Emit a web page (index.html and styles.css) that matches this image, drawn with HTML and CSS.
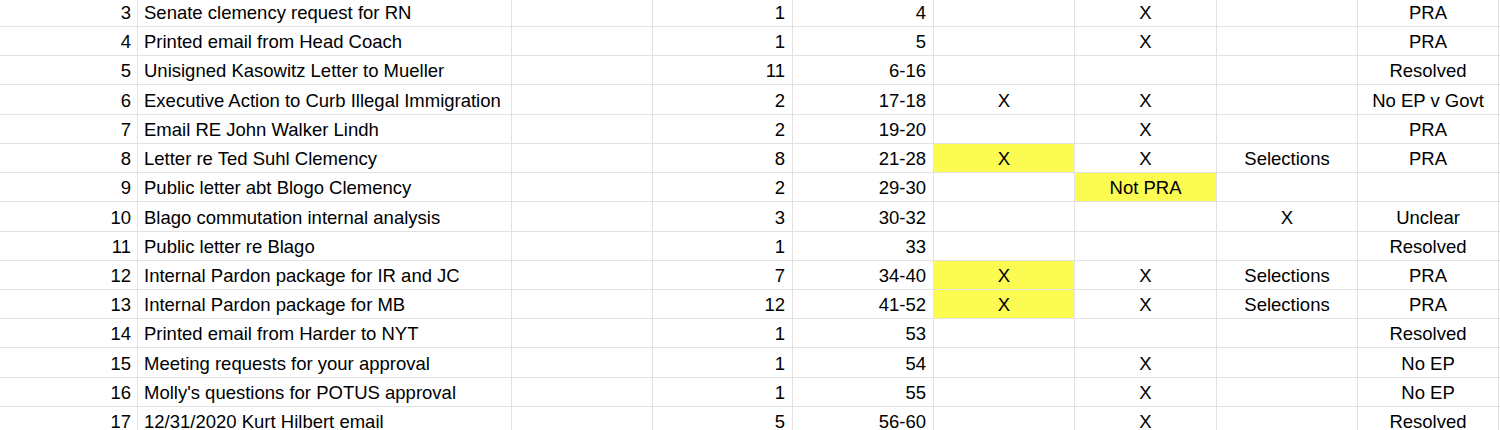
FILE: index.html
```html
<!DOCTYPE html>
<html lang="en">
<head>
<meta charset="utf-8">
<title>Sheet</title>
<link rel="stylesheet" href="styles.css">
</head>
<body>
<div class="sheet">
  <div class="c rn">3</div><div class="c tl">Senate clemency request for RN</div><div class="c"></div><div class="c num">1</div><div class="c num">4</div><div class="c ctr"></div><div class="c ctr">X</div><div class="c ctr"></div><div class="c ctr">PRA</div><div class="c"></div>
  <div class="c rn">4</div><div class="c tl">Printed email from Head Coach</div><div class="c"></div><div class="c num">1</div><div class="c num">5</div><div class="c ctr"></div><div class="c ctr">X</div><div class="c ctr"></div><div class="c ctr">PRA</div><div class="c"></div>
  <div class="c rn">5</div><div class="c tl">Unisigned Kasowitz Letter to Mueller</div><div class="c"></div><div class="c num">11</div><div class="c num">6-16</div><div class="c ctr"></div><div class="c ctr"></div><div class="c ctr"></div><div class="c ctr">Resolved</div><div class="c"></div>
  <div class="c rn">6</div><div class="c tl">Executive Action to Curb Illegal Immigration</div><div class="c"></div><div class="c num">2</div><div class="c num">17-18</div><div class="c ctr">X</div><div class="c ctr">X</div><div class="c ctr"></div><div class="c ctr">No EP v Govt</div><div class="c"></div>
  <div class="c rn">7</div><div class="c tl">Email RE John Walker Lindh</div><div class="c"></div><div class="c num">2</div><div class="c num">19-20</div><div class="c ctr"></div><div class="c ctr">X</div><div class="c ctr"></div><div class="c ctr">PRA</div><div class="c"></div>
  <div class="c rn">8</div><div class="c tl">Letter re Ted Suhl Clemency</div><div class="c"></div><div class="c num">8</div><div class="c num">21-28</div><div class="c ctr hl">X</div><div class="c ctr">X</div><div class="c ctr">Selections</div><div class="c ctr">PRA</div><div class="c"></div>
  <div class="c rn">9</div><div class="c tl">Public letter abt Blogo Clemency</div><div class="c"></div><div class="c num">2</div><div class="c num">29-30</div><div class="c ctr"></div><div class="c ctr hl">Not PRA</div><div class="c ctr"></div><div class="c ctr"></div><div class="c"></div>
  <div class="c rn">10</div><div class="c tl">Blago commutation internal analysis</div><div class="c"></div><div class="c num">3</div><div class="c num">30-32</div><div class="c ctr"></div><div class="c ctr"></div><div class="c ctr">X</div><div class="c ctr">Unclear</div><div class="c"></div>
  <div class="c rn">11</div><div class="c tl">Public letter re Blago</div><div class="c"></div><div class="c num">1</div><div class="c num">33</div><div class="c ctr"></div><div class="c ctr"></div><div class="c ctr"></div><div class="c ctr">Resolved</div><div class="c"></div>
  <div class="c rn">12</div><div class="c tl">Internal Pardon package for IR and JC</div><div class="c"></div><div class="c num">7</div><div class="c num">34-40</div><div class="c ctr hl">X</div><div class="c ctr">X</div><div class="c ctr">Selections</div><div class="c ctr">PRA</div><div class="c"></div>
  <div class="c rn">13</div><div class="c tl">Internal Pardon package for MB</div><div class="c"></div><div class="c num">12</div><div class="c num">41-52</div><div class="c ctr hl">X</div><div class="c ctr">X</div><div class="c ctr">Selections</div><div class="c ctr">PRA</div><div class="c"></div>
  <div class="c rn">14</div><div class="c tl">Printed email from Harder to NYT</div><div class="c"></div><div class="c num">1</div><div class="c num">53</div><div class="c ctr"></div><div class="c ctr"></div><div class="c ctr"></div><div class="c ctr">Resolved</div><div class="c"></div>
  <div class="c rn">15</div><div class="c tl">Meeting requests for your approval</div><div class="c"></div><div class="c num">1</div><div class="c num">54</div><div class="c ctr"></div><div class="c ctr">X</div><div class="c ctr"></div><div class="c ctr">No EP</div><div class="c"></div>
  <div class="c rn">16</div><div class="c tl">Molly's questions for POTUS approval</div><div class="c"></div><div class="c num">1</div><div class="c num">55</div><div class="c ctr"></div><div class="c ctr">X</div><div class="c ctr"></div><div class="c ctr">No EP</div><div class="c"></div>
  <div class="c rn">17</div><div class="c tl">12/31/2020 Kurt Hilbert email</div><div class="c"></div><div class="c num">5</div><div class="c num">56-60</div><div class="c ctr"></div><div class="c ctr">X</div><div class="c ctr"></div><div class="c ctr">Resolved</div><div class="c"></div>
</div>
</body>
</html>
```

FILE: styles.css
```css
html, body {
  margin: 0;
  padding: 0;
  background: #ffffff;
  overflow: hidden;
}

.sheet {
  display: grid;
  grid-template-columns: 137px 373px 140px 139px 140px 140px 141px 140px 140px 1fr;
  grid-auto-rows: 28.23px;
  gap: 1px;
  width: 1500px;
  margin-top: -2.2px;
  background: #e2e2e2;
  font-family: "Liberation Sans", Arial, sans-serif;
  font-size: 18.5px;
  color: #000000;
}

.c {
  background: #ffffff;
  display: flex;
  align-items: flex-end;
  padding: 0 6px 4px;
  line-height: 18px;
  white-space: nowrap;
  overflow: hidden;
}

.rn, .num {
  justify-content: flex-end;
}

.num {
  padding-right: 7px;
}

.tl {
  justify-content: flex-start;
}

.ctr {
  justify-content: center;
}

.hl {
  background: #fcfb52;
}
```
